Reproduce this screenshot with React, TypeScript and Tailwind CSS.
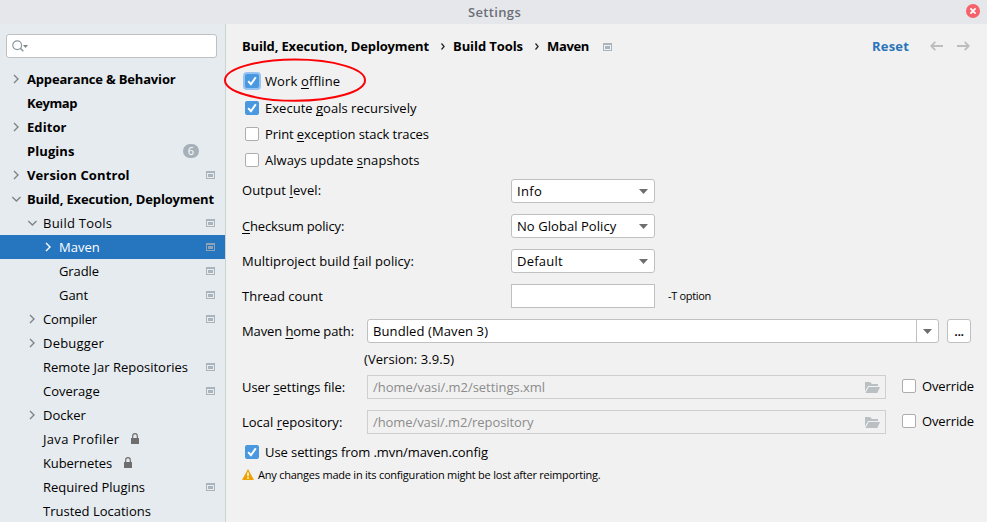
import type { ReactNode } from 'react';
import clsx from 'clsx';

type Node = {
  label: string;
  level: 0 | 1 | 2;
  track?: string;
  state?: 'open' | 'closed';
  project?: boolean;
  locked?: boolean;
  selected?: boolean;
  badge?: number;
};

const nodes: Node[] = [
  { label: 'Appearance & Behavior', level: 0, state: 'closed', track: 'tracking-[-0.18px]' },
  { label: 'Keymap', level: 0, track: 'tracking-[-0.43px]' },
  { label: 'Editor', level: 0, state: 'closed', track: 'tracking-[0.07px]' },
  { label: 'Plugins', level: 0, badge: 6, track: 'tracking-[0.07px]' },
  { label: 'Version Control', level: 0, state: 'closed', project: true, track: 'tracking-[0.12px]' },
  { label: 'Build, Execution, Deployment', level: 0, state: 'open', track: 'tracking-[-0.15px]' },
  { label: 'Build Tools', level: 1, state: 'open', project: true, track: 'tracking-[0.25px]' },
  { label: 'Maven', level: 2, state: 'closed', project: true, selected: true },
  { label: 'Gradle', level: 2, project: true, track: 'tracking-[-0.09px]' },
  { label: 'Gant', level: 2, project: true, track: 'tracking-[-0.07px]' },
  { label: 'Compiler', level: 1, state: 'closed', project: true, track: 'tracking-[-0.15px]' },
  { label: 'Debugger', level: 1, state: 'closed', track: 'tracking-[0.2px]' },
  { label: 'Remote Jar Repositories', level: 1, project: true },
  { label: 'Coverage', level: 1, project: true },
  { label: 'Docker', level: 1, state: 'closed' },
  { label: 'Java Profiler', level: 1, locked: true, track: 'tracking-[0.32px]' },
  { label: 'Kubernetes', level: 1, locked: true, track: 'tracking-[-0.09px]' },
  { label: 'Required Plugins', level: 1, project: true },
  { label: 'Trusted Locations', level: 1 },
];

function ProjectIcon({ className }: { className?: string }) {
  return (
    <svg className={clsx('h-2 w-[9px] shrink-0', className)} viewBox="0 0 9 8" shapeRendering="crispEdges">
      <path fill="currentColor" fillRule="evenodd" d="M0 0h9v8H0zM1 2v5h7V2z" />
      <path fill="currentColor" d="M2 3h5v3H2z" />
    </svg>
  );
}

function Chevron({ open, light }: { open: boolean; light?: boolean }) {
  return (
    <svg
      className={clsx('size-2.5 shrink-0', light ? 'text-white' : 'text-[#7f8487]')}
      viewBox="0 0 10 10"
      fill="none"
      stroke="currentColor"
      strokeWidth="1.4"
    >
      <path d={open ? 'M1.3 3l4.1 4 4.1-4' : 'M3 1l4 4-4 4'} />
    </svg>
  );
}

function Lock() {
  return (
    <svg className="ml-3 h-[11px] w-2 shrink-0" viewBox="0 0 8 11">
      <path d="M0 5h8v6H0z" fill="#6e6e6e" />
      <path d="M1.7 5V3a2.3 2.3 0 0 1 4.6 0v2" fill="none" stroke="#6e6e6e" strokeWidth="1.2" />
    </svg>
  );
}

function TreeRow({ node }: { node: Node }) {
  return (
    <div
      className={clsx(
        'flex h-6 shrink-0 items-center pr-2.5',
        node.level === 0 && 'pl-[11px] font-bold',
        node.level === 1 && 'pl-[27px]',
        node.level === 2 && 'pl-[43px]',
        node.selected ? 'bg-[#2675bf] text-white' : 'text-black',
      )}
    >
      <span className="flex w-4 shrink-0">
        {node.state && <Chevron open={node.state === 'open'} light={node.selected} />}
      </span>
      <span className={clsx('whitespace-nowrap', node.track)}>{node.label}</span>
      {node.locked && <span className="mb-0.5 flex"><Lock /></span>}
      <span className="grow" />
      {node.project && <ProjectIcon className={node.selected ? 'text-[#8fa3b5]' : 'text-[#a9b4bd]'} />}
      {node.badge && (
        <span className="mr-4 flex h-3.5 w-4 items-center justify-center rounded-full bg-[#a5b0b9] text-[11px] font-normal text-white">
          {node.badge}
        </span>
      )}
    </div>
  );
}

function Check({ checked, focused }: { checked?: boolean; focused?: boolean }) {
  return (
    <span
      className={clsx(
        'flex size-3.5 shrink-0 items-center justify-center rounded-[2px]',
        checked ? 'bg-[#4a99e0]' : 'border border-[#adadad] bg-white',
        focused && 'ring-2 ring-[#97c3f3]',
      )}
    >
      {checked && (
        <svg className="size-3.5" viewBox="0 0 14 14" fill="none" stroke="white" strokeWidth="2">
          <path d="M3.2 7.2l2.7 3 4.9-7" />
        </svg>
      )}
    </span>
  );
}

function U({ children }: { children: ReactNode }) {
  return <span className="underline decoration-1 underline-offset-2 [text-decoration-skip-ink:none]">{children}</span>;
}

function CheckRow({ children, className, ...box }: { children: ReactNode; checked?: boolean; focused?: boolean; className?: string }) {
  return (
    <div className={clsx('flex h-[26px] items-center pl-[3px]', className)}>
      <Check {...box} />
      <span className="ml-1.5 whitespace-nowrap">{children}</span>
    </div>
  );
}

function Arrow() {
  return (
    <svg className="h-[5px] w-[9px] shrink-0" viewBox="0 0 9 5">
      <path d="M0 0h9L4.5 5z" fill="#6e6e6e" />
    </svg>
  );
}

function SelectRow({ label, value, track }: { label: ReactNode; value: string; track: string }) {
  return (
    <div className="flex h-6 items-center">
      <span className="w-[269px] whitespace-nowrap">{label}</span>
      <div className="flex h-6 w-36 items-center justify-between rounded-[3px] border border-[#c0c0c0] bg-white pr-1.5 pl-[5px]">
        <span className={clsx('whitespace-nowrap', track)}>{value}</span>
        <Arrow />
      </div>
    </div>
  );
}

function FileRow({ label, path, track }: { label: ReactNode; path: string; track: string }) {
  return (
    <div className="flex h-6 items-center">
      <span className="w-[125px] whitespace-nowrap">{label}</span>
      <div className="flex h-6 w-[519px] items-center justify-between border border-[#cfcfcf] pr-[5px] pl-[5px] text-[#8c8c8c]">
        <span className={clsx('whitespace-nowrap', track)}>{path}</span>
        <svg className="h-[11px] w-[15px]" viewBox="0 0 15 11" fill="#b9bfc3">
          <path d="M0 0h5l2 2h6v2H3L0 9.5z" />
          <path d="M3.7 5H15l-2.7 6H.4z" />
        </svg>
      </div>
      <div className="ml-4 flex items-center pb-0.5">
        <Check />
        <span className="ml-1.5 tracking-[-0.13px]">Override</span>
      </div>
    </div>
  );
}

function Crumb() {
  return (
    <svg className="ml-1 h-[7px] w-1 shrink-0" viewBox="0 0 4 7" fill="none" stroke="#222" strokeWidth="1.2">
      <path d="M.5.5l2.6 3-2.6 3" />
    </svg>
  );
}

function NavArrow({ flip }: { flip?: boolean }) {
  return (
    <svg
      className={clsx('h-2.5 w-[13px]', flip && '-scale-x-100')}
      viewBox="0 0 13 10"
      fill="none"
      stroke="#bdbdbd"
      strokeWidth="1.8"
    >
      <path d="M13 5H1.5M5.3.8L1.2 5l4.1 4.2" />
    </svg>
  );
}

export default function App() {
  return (
    <div className="flex h-[522px] w-[987px] flex-col overflow-hidden bg-[#f1f1f1] font-['Open_Sans','Noto_Sans',sans-serif] text-[13px] leading-4 text-black">
      <header className="grid h-6 shrink-0 grid-cols-[1fr_auto_1fr] items-center bg-[#e6e7eb]">
        <span />
        <span className="pl-0.5 font-semibold tracking-[0.35px] text-[#6b6f78]">Settings</span>
        <span className="mr-[7px] mb-0.5 flex size-3.5 items-center justify-center justify-self-end rounded-full bg-[#f6626a]">
          <svg className="size-1.5" viewBox="0 0 6 6" stroke="white" strokeWidth="1.8">
            <path d="M.4.4l5.2 5.2M5.6.4L.4 5.6" />
          </svg>
        </span>
      </header>

      <div className="flex min-h-0 grow">
        <aside className="flex w-[226px] shrink-0 flex-col overflow-hidden border-r border-[#cdd1d4] bg-[#e6ebef] pt-2.5">
          <div className="mx-1.5 mb-[9px] flex h-6 w-[211px] shrink-0 items-center rounded-[3px] border border-[#c0c0c0] bg-white pl-[5px]">
            <svg className="h-3 w-4" viewBox="0 0 16 12" fill="none" stroke="#8c979d" strokeWidth="1.2">
              <circle cx="5.2" cy="5.2" r="4.4" />
              <path d="M8.3 8.3l3 3" strokeWidth="1.6" />
              <path d="M11 5h5l-2.5 3z" fill="#7f8487" stroke="none" />
            </svg>
          </div>
          {nodes.map((node) => (
            <TreeRow key={node.label} node={node} />
          ))}
        </aside>

        <main className="relative flex grow flex-col pl-4">
          <div className="flex h-11 shrink-0 items-center font-bold whitespace-nowrap">
            <span className="w-[187px] tracking-[-0.15px]">Build, Execution, Deployment</span>
            <span className="flex w-6 items-center justify-center"><Crumb /></span>
            <span className="w-[70px] tracking-[-0.08px]">Build Tools</span>
            <span className="flex w-6 items-center justify-center"><Crumb /></span>
            <span className="w-[42px] tracking-[-0.35px]">Maven</span>
            <ProjectIcon className="mt-0.5 ml-3.5 text-[#a9b4bd]" />
            <span className="ml-auto tracking-[0.19px] text-[#2b73ba]">Reset</span>
            <span className="mr-[17px] ml-[21px] flex gap-3.5">
              <NavArrow />
              <NavArrow flip />
            </span>
          </div>

          <CheckRow checked focused className="tracking-[0.12px]">Work <U>o</U>ffline</CheckRow>
          <CheckRow checked className="mt-px tracking-[0.02px]">Execute <U>g</U>oals recursively</CheckRow>
          <CheckRow className="tracking-[-0.09px]">Print <U>e</U>xception stack traces</CheckRow>
          <CheckRow className="tracking-[0.04px]">Always update <U>s</U>napshots</CheckRow>

          <div className="mt-1.5 flex flex-col gap-[11px]">
            <SelectRow label={<span className="block pb-0.5 tracking-[0.12px]">Output <U>l</U>evel:</span>} value="Info" track="tracking-[0.3px]" />
            <SelectRow label={<span className="tracking-[-0.15px]"><U>C</U>hecksum policy:</span>} value="No Global Policy" track="tracking-[0.06px]" />
            <SelectRow label={<span className="tracking-[0.04px]">Multiproject build <U>f</U>ail policy:</span>} value="Default" track="tracking-[0.25px]" />
            <div className="flex h-6 items-center">
              <span className="w-[269px]">Thread count</span>
              <div className="h-6 w-36 border border-[#c0c0c0] bg-white" />
              <span className="ml-[13px] text-[11px] tracking-[-0.32px]">-T option</span>
            </div>
            <div className="flex h-6 items-center">
              <span className="w-[125px] tracking-[-0.11px]">Maven <U>h</U>ome path:</span>
              <div className="flex h-6 w-[572px] items-center rounded-[3px] border border-[#c0c0c0] bg-white">
                <span className="grow pl-[5px] tracking-[0.1px]">Bundled (Maven 3)</span>
                <span className="flex h-full w-[22px] items-center justify-center border-l border-[#c0c0c0]"><Arrow /></span>
              </div>
              <div className="ml-2 flex h-6 w-6 items-center justify-center rounded-[3px] border border-[#c0c0c0] bg-white font-semibold tracking-[-0.4px]">...</div>
            </div>
          </div>

          <div className="flex h-8 items-center pl-[122px] tracking-[0.05px]">(Version: 3.9.5)</div>

          <div className="flex flex-col gap-[11px]">
            <FileRow label={<span className="tracking-[-0.05px]">User <U>s</U>ettings file:</span>} path="/home/vasi/.m2/settings.xml" track="tracking-[-0.04px]" />
            <FileRow label={<span>Local <U>r</U>epository:</span>} path="/home/vasi/.m2/repository" track="tracking-[-0.08px]" />
          </div>

          <CheckRow checked className="mt-[5px] tracking-[-0.08px]">Use settings from .mvn/maven.config</CheckRow>
          <div className="mt-0.5 flex h-4 items-center text-[11px]">
            <svg className="mr-1 mb-0.5 h-[11px] w-3" viewBox="0 0 12 11">
              <path d="M6 0l6 11H0z" fill="#eda200" />
              <path d="M6 3.5v3.7M6 8.2v1.6" stroke="white" strokeWidth="1.5" />
            </svg>
            <span className="whitespace-nowrap tracking-[-0.23px]">Any changes made in its configuration might be lost after reimporting.</span>
          </div>

          <svg className="pointer-events-none absolute top-[34px] -left-[3px] h-11 w-[144px]" viewBox="0 0 144 44" fill="none">
            <ellipse cx="72" cy="22.2" rx="70" ry="20.6" stroke="#fb0207" strokeWidth="2" />
          </svg>
        </main>
      </div>
    </div>
  );
}
